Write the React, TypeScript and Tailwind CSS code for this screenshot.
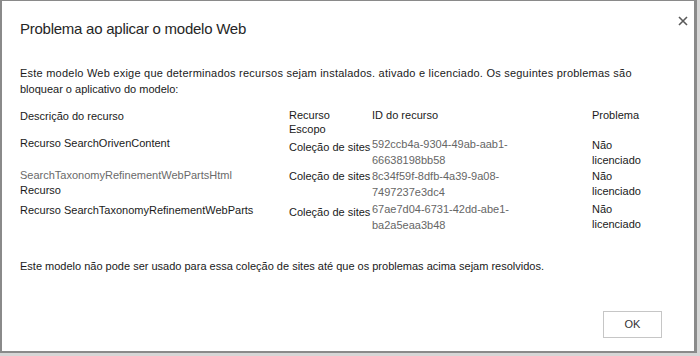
import React from "react";

const rows = [
  {
    desc: ["Recurso SearchOrivenContent"],
    descGray: false,
    descPad: "pt-0",
    scopePad: "pt-[3px]",
    idPad: "pt-0",
    probPad: "pt-[2px]",
    scope: "Coleção de sites",
    id: ["592ccb4a-9304-49ab-aab1-", "66638198bb58"],
  },
  {
    desc: ["SearchTaxonomyRefinementWebPartsHtml", "Recurso"],
    descGray: true,
    descPad: "pt-0",
    scopePad: "pt-0",
    idPad: "pt-0",
    probPad: "pt-[1px]",
    scope: "Coleção de sites",
    id: ["8c34f59f-8dfb-4a39-9a08-", "7497237e3dc4"],
  },
  {
    desc: ["Recurso SearchTaxonomyRefinementWebParts"],
    descGray: false,
    descPad: "pt-[3px]",
    scopePad: "pt-[4px]",
    idPad: "pt-[1px]",
    probPad: "pt-[2px]",
    scope: "Coleção de sites",
    id: ["67ae7d04-6731-42dd-abe1-", "ba2a5eaa3b48"],
  },
];

export default function App() {
  return (
    <div className="w-[700px] h-[356px] bg-[#d6d6d6] font-['Liberation_Sans',Arial,sans-serif]">
      <div className="w-[697px] h-[353px] bg-white border-l-2 border-t border-r-[3px] border-b-[2px] border-[#8a8a8a] flex flex-col relative">
        <button className="absolute right-[4px] top-[13px] w-[14px] h-[14px] flex items-center justify-center">
          <svg width="10" height="10" viewBox="0 0 10 10">
            <path d="M1 1 L9 9 M9 1 L1 9" stroke="#5a5a5a" strokeWidth="1.6" />
          </svg>
        </button>
        <div className="pl-[18px] pt-[18px] text-[15px] tracking-[-0.25px] text-[#262626] leading-[20px]">
          Problema ao aplicar o modelo Web
        </div>
        <div className="ml-[18px] mt-[26px] text-[11px] leading-[16px] text-[#1a1a1a]">
          <div className="tracking-[0.23px] whitespace-nowrap">
            Este modelo Web exige que determinados recursos sejam instalados. ativado e licenciado. Os seguintes problemas são
          </div>
          <div>bloquear o aplicativo do modelo:</div>
        </div>
        <div className="pl-[18px] pt-[11px] text-[11px] text-[#1a1a1a]">
          <div className="grid grid-cols-[269px_83px_220px_1fr] leading-[14px]">
            <div className="pt-[1px]">Descrição do recurso</div>
            <div>
              <div>Recurso</div>
              <div>Escopo</div>
            </div>
            <div>ID do recurso</div>
            <div>Problema</div>
          </div>
          {rows.map((r, i) => (
            <div key={i} className="grid grid-cols-[269px_83px_220px_1fr] leading-[16px] h-[32px]">
              <div className={r.descPad}>
                {r.desc.map((d, j) => (
                  <div key={j} className={r.descGray && j === 0 ? "text-[#6a6a6a] leading-[15px]" : "leading-[15px]"}>
                    {d}
                  </div>
                ))}
              </div>
              <div className={r.scopePad + " whitespace-nowrap"}>{r.scope}</div>
              <div className={r.idPad + " text-[#666]"}>
                {r.id.map((d, j) => (
                  <div key={j}>{d}</div>
                ))}
              </div>
              <div className={r.probPad + " leading-[15px]"}>
                <div>Não</div>
                <div>licenciado</div>
              </div>
            </div>
          ))}
        </div>
        <div className="pl-[18px] pt-[26px] text-[11px] leading-[16px] text-[#1a1a1a]">
          Este modelo não pode ser usado para essa coleção de sites até que os problemas acima sejam resolvidos.
        </div>
        <div className="flex-1" />
        <div className="flex justify-end pr-[32px] pb-[13px]">
          <button className="w-[59px] h-[27px] border border-[#c6c6c6] bg-white text-[11px] text-[#333]">
            OK
          </button>
        </div>
      </div>
    </div>
  );
}
